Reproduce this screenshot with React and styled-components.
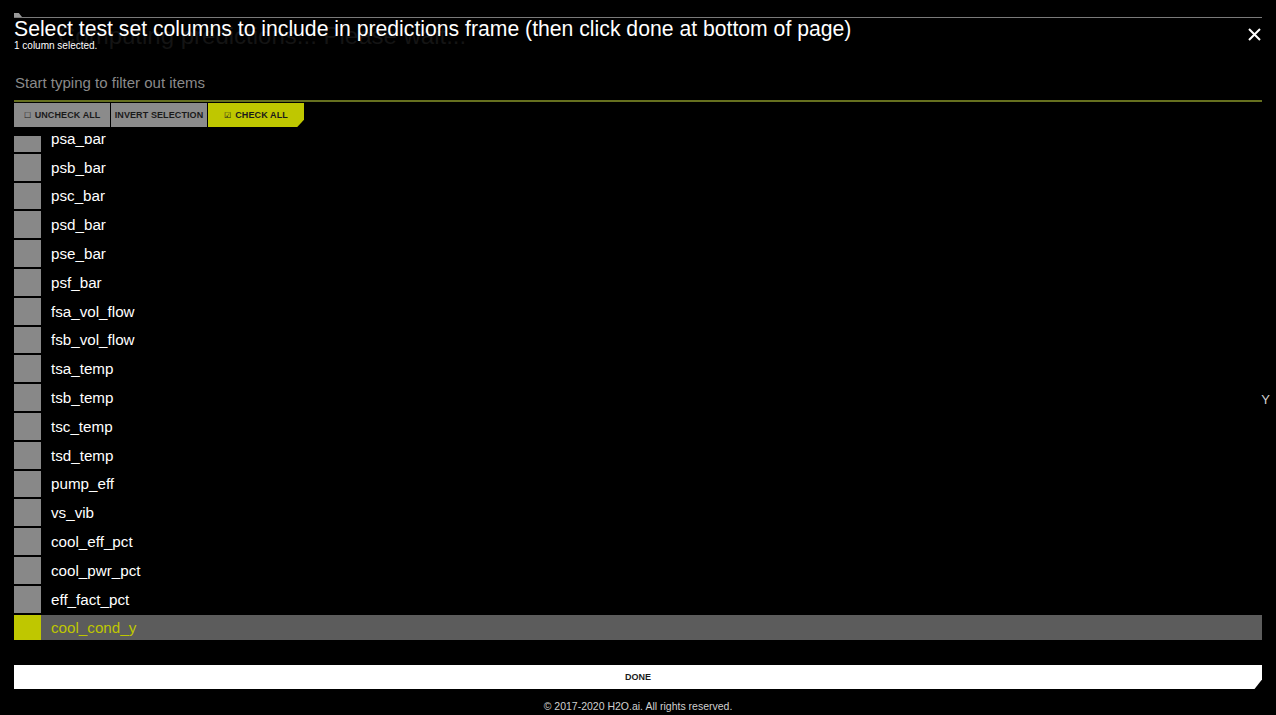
import React, { useEffect, useRef } from "react";
import styled, { createGlobalStyle } from "styled-components";

const Global = createGlobalStyle`
  html, body { margin: 0; padding: 0; background: #000; }
  body { font-family: "Liberation Sans", Arial, sans-serif; color: #fff; }
  * { box-sizing: border-box; }
`;

const Page = styled.div`
  position: relative;
  width: 1276px;
  height: 715px;
  background: #000;
  overflow: hidden;
`;

const BehindText = styled.div`
  position: absolute;
  left: 58px;
  top: 22px;
  font-size: 24px;
  color: #141414;
  white-space: nowrap;
`;

const StrayLetter = styled.div`
  position: absolute;
  right: 6px;
  top: 392px;
  font-size: 13px;
  color: #d0d0d0;
`;

const Dialog = styled.div`
  position: relative;
  display: flex;
  flex-direction: column;
  padding: 13px 14px 0 14px;
`;

const TopRule = styled.div`
  position: relative;
  height: 5px;
  border-bottom: 1px solid #7a7a7a;
  &::before {
    content: "";
    position: absolute;
    left: 0;
    top: 0;
    width: 8px;
    height: 4px;
    background: #9a9a9a;
    clip-path: polygon(0 0, 60% 0, 100% 100%, 0 100%);
  }
`;

const Header = styled.div`
  display: flex;
  align-items: flex-start;
  justify-content: space-between;
`;

const TitleBlock = styled.div`
  display: flex;
  flex-direction: column;
`;

const Title = styled.h1`
  margin: 0;
  font-size: 21.2px;
  font-weight: 400;
  line-height: 22px;
  color: #fff;
  white-space: nowrap;
`;

const Subtitle = styled.div`
  font-size: 10px;
  line-height: 12px;
  color: #fff;
`;

const CloseButton = styled.button`
  display: flex;
  align-items: center;
  justify-content: center;
  width: 20px;
  height: 20px;
  margin-top: 6px;
  margin-right: -2px;
  padding: 0;
  background: none;
  border: 0;
  color: #fff;
`;

const FilterInput = styled.input`
  margin-top: 20px;
  height: 30px;
  padding: 0 1px 8px;
  background: transparent;
  border: 0;
  border-bottom: 2px solid #66701f;
  color: #fff;
  font-family: "Liberation Sans", Arial, sans-serif;
  font-size: 15px;
  outline: none;
  &::placeholder { color: #8a8a8a; }
`;

const ButtonBar = styled.div`
  display: flex;
  gap: 1px;
  margin-top: 1px;
`;

const ActionButton = styled.button`
  width: 96px;
  height: 24px;
  padding: 0;
  border: 0;
  background: ${(p) => (p.$accent ? "#bfc700" : "#8b8b8b")};
  color: #1a1a1a;
  font-family: "Liberation Sans", Arial, sans-serif;
  font-size: 9px;
  font-weight: 700;
  letter-spacing: 0.1px;
  text-transform: uppercase;
  clip-path: ${(p) =>
    p.$accent ? "polygon(0 0, 100% 0, 100% 70%, 93% 100%, 0 100%)" : "none"};
`;

const Glyph = styled.span`
  font-size: 8px;
  margin-right: 4px;
  font-weight: 400;
`;

const List = styled.div`
  height: 504px;
  margin-top: 9px;
  overflow-y: scroll;
  scrollbar-width: none;
  &::-webkit-scrollbar { display: none; }
`;

const Row = styled.div`
  display: flex;
  align-items: center;
  height: 26.8px;
  margin-bottom: 2px;
  background: ${(p) => (p.$selected ? "#5c5c5c" : "transparent")};
`;

const Box = styled.div`
  width: 27px;
  height: 100%;
  background: ${(p) => (p.$selected ? "#bfc700" : "#888888")};
`;

const Label = styled.span`
  margin-left: 10px;
  font-size: 15.2px;
  color: ${(p) => (p.$selected ? "#bfc700" : "#fff")};
`;

const DoneButton = styled.button`
  margin-top: 25px;
  height: 24px;
  border: 0;
  background: #fff;
  color: #1a1a1a;
  font-family: "Liberation Sans", Arial, sans-serif;
  font-size: 9px;
  font-weight: 700;
  clip-path: polygon(0 0, 100% 0, 100% 60%, 99.4% 100%, 0 100%);
`;

const Footer = styled.div`
  margin-top: 11px;
  text-align: center;
  font-size: 10.5px;
  color: #d0d0d0;
`;

const columns = [
  "psa_bar",
  "psb_bar",
  "psc_bar",
  "psd_bar",
  "pse_bar",
  "psf_bar",
  "fsa_vol_flow",
  "fsb_vol_flow",
  "tsa_temp",
  "tsb_temp",
  "tsc_temp",
  "tsd_temp",
  "pump_eff",
  "vs_vib",
  "cool_eff_pct",
  "cool_pwr_pct",
  "eff_fact_pct",
  "cool_cond_y",
];

export default function App() {
  const listRef = useRef(null);
  useEffect(() => {
    if (listRef.current) listRef.current.scrollTop = 11;
  }, []);
  return (
    <Page>
      <Global />
      <BehindText>Computing predictions... Please wait...</BehindText>
      <Dialog>
        <TopRule />
        <Header>
          <TitleBlock>
            <Title>
              Select test set columns to include in predictions frame (then click done at bottom of page)
            </Title>
            <Subtitle>1 column selected.</Subtitle>
          </TitleBlock>
          <CloseButton aria-label="close">
            <svg width="13" height="13" viewBox="0 0 13 13">
              <path d="M1 1L12 12M12 1L1 12" stroke="#fff" strokeWidth="2" />
            </svg>
          </CloseButton>
        </Header>
        <FilterInput placeholder="Start typing to filter out items" />
        <ButtonBar>
          <ActionButton><Glyph>☐</Glyph>Uncheck all</ActionButton>
          <ActionButton>Invert selection</ActionButton>
          <ActionButton $accent><Glyph>☑</Glyph>Check all</ActionButton>
        </ButtonBar>
        <List ref={listRef}>
          {columns.map((c) => {
            const sel = c === "cool_cond_y";
            return (
              <Row key={c} $selected={sel}>
                <Box $selected={sel} />
                <Label $selected={sel}>{c}</Label>
              </Row>
            );
          })}
        </List>
        <DoneButton>DONE</DoneButton>
        <Footer>© 2017-2020 H2O.ai. All rights reserved.</Footer>
      </Dialog>
      <StrayLetter>Y</StrayLetter>
    </Page>
  );
}
